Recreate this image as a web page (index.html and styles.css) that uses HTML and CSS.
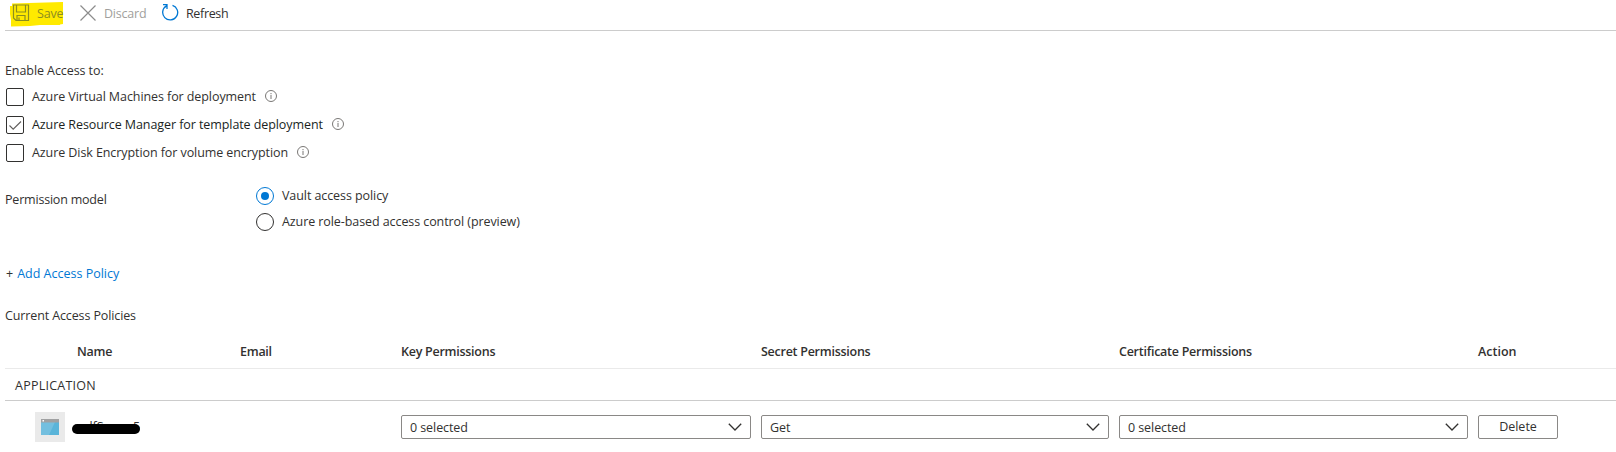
FILE: index.html
```html
<!DOCTYPE html>
<html lang="en">
<head>
<meta charset="utf-8">
<title>Access policies</title>
<link rel="stylesheet" href="styles.css">
</head>
<body>
<header class="toolbar">
  <div class="tool save">
    <svg class="marker" viewBox="0 0 54 25" width="54" height="25"><path d="M2 1.500L53 0V22L50 22.500V23L30 23L20 24L1 24.500V18L0 12V4H2Z" fill="#ffea00"/></svg>
    <svg class="tool-icon" viewBox="0 0 18 18" width="18" height="18" fill="none" stroke="#8b8d20" stroke-width="1.2"><path d="M1.500 1h15v15.500H4L1.500 14zM4.500 1v7h9V1M5 16.500v-5h8v5M7 16.500v-3"/></svg>
    <span>Save</span>
  </div>
  <div class="tool discard">
    <svg class="tool-icon" viewBox="0 0 18 18" width="18" height="18" fill="none" stroke="#8c8c8c" stroke-width="1.2"><path d="M1.500 1.500l15 15M16.500 1.500l-15 15"/></svg>
    <span>Discard</span>
  </div>
  <div class="tool refresh">
    <svg class="tool-icon" viewBox="0 0 18 18" width="18" height="18" fill="none" stroke="#0078d4" stroke-width="1.3"><path d="M11.500 1.300A7.500 7.500 0 1 1 5.500 1.900M2 .7H6V5"/></svg>
    <span>Refresh</span>
  </div>
</header>
<main>
  <section class="enable">
    <p class="label">Enable Access to:</p>
    <div class="check-row"><span class="box"></span><span>Azure Virtual Machines for deployment</span><svg class="info" viewBox="0 0 12 12" width="12" height="12"><circle cx="6" cy="6" r="5.500"/><path d="M6 5v4M6 3v1.200"/></svg></div>
    <div class="check-row"><span class="box"><svg viewBox="0 0 16 16" width="16" height="16"><path d="M2.500 8.500l3.700 3.700L14 4.500"/></svg></span><span class="dark">Azure Resource Manager for template deployment</span><svg class="info" viewBox="0 0 12 12" width="12" height="12"><circle cx="6" cy="6" r="5.500"/><path d="M6 5v4M6 3v1.200"/></svg></div>
    <div class="check-row"><span class="box"></span><span>Azure Disk Encryption for volume encryption</span><svg class="info" viewBox="0 0 12 12" width="12" height="12"><circle cx="6" cy="6" r="5.500"/><path d="M6 5v4M6 3v1.200"/></svg></div>
  </section>
  <section class="model">
    <span class="model-label">Permission model</span>
    <div class="radios">
      <div class="radio-row"><span class="radio on"></span><span>Vault access policy</span></div>
      <div class="radio-row"><span class="radio"></span><span>Azure role-based access control (preview)</span></div>
    </div>
  </section>
  <a class="add"><span class="plus">+</span><span>Add Access Policy</span></a>
  <p class="current">Current Access Policies</p>
  <div class="grid head">
    <span class="name">Name</span><span>Email</span><span>Key Permissions</span><span>Secret Permissions</span><span>Certificate Permissions</span><span class="action">Action</span>
  </div>
  <div class="group">APPLICATION</div>
  <div class="grid item">
    <div class="identity">
      <span class="app"><svg viewBox="0 0 18 16" width="18" height="16"><path fill="#59b4d9" d="M0 3h18v13H0z"/><path fill="#73bfdf" d="M0 3h14L8 16H0z"/><path fill="#a0a1a2" d="M0 0h18v3.500H0z"/><path fill="#fff" d="M1.500 1h1.500v1.500H1.500z"/></svg></span>
      <span class="redacted"><span class="peek">dfS</span><span class="peek last">5</span><span class="ink"></span></span>
    </div>
    <span></span>
    <div class="select"><span>0 selected</span><svg viewBox="0 0 14 8" width="14" height="8"><path d="M.8 .8L7 7L13.200 .8"/></svg></div>
    <div class="select"><span>Get</span><svg viewBox="0 0 14 8" width="14" height="8"><path d="M.8 .8L7 7L13.200 .8"/></svg></div>
    <div class="select"><span>0 selected</span><svg viewBox="0 0 14 8" width="14" height="8"><path d="M.8 .8L7 7L13.200 .8"/></svg></div>
    <button class="delete">Delete</button>
  </div>
</main>
</body>
</html>
```
FILE: styles.css
```css
* { box-sizing: border-box; }
body { margin: 0; height: 452px; overflow: hidden; background: #fff; color: #323130; font: 12.5px/18px "Open Sans", "Noto Sans", sans-serif; letter-spacing: -0.08px; white-space: nowrap; }
p { margin: 0; }
svg { display: block; flex: none; }
.toolbar { display: flex; height: 31px; margin-left: 5px; border-bottom: 1px solid #ccc; padding: 4px 0 0 7px; letter-spacing: -0.2px; }
.tool { display: flex; height: 18px; gap: 7px; position: relative; }
.tool span { padding-top: 1px; }
.save { width: 67px; color: #8b8d20; }
.save .tool-icon, .save span { position: relative; }
.marker { position: absolute; left: -2px; top: -2px; }
.discard { width: 82px; color: #a19f9d; }
.refresh { letter-spacing: -0.35px; }
.enable { padding: 31px 0 0 5px; }
.label { height: 21px; }
.check-row { display: flex; align-items: center; height: 28px; }
.box { width: 18px; height: 18px; margin-right: 8px; margin-left: 1px; border: 1px solid #323130; border-radius: 2px; }
.box path { fill: none; stroke: #605e5c; stroke-width: 1.1; }
.dark { color: #201f1e; }
.info { margin: 0 0 2px 9px; fill: none; stroke: #797775; stroke-width: 1; }
.model { display: flex; height: 69px; padding: 16px 0 0 5px; }
.model-label { width: 251px; padding-top: 8px; letter-spacing: -0.2px; }
.radio-row { display: flex; align-items: center; height: 26px; gap: 8px; }
.radio { width: 18px; height: 18px; border: 1px solid #323130; border-radius: 50%; display: grid; place-items: center; }
.radio.on { border-color: #0078d4; }
.radio.on::after { content: ""; width: 8px; height: 8px; border-radius: 50%; background: #0078d4; }
.add { display: flex; gap: 4px; margin: 29px 0 0 6px; color: #0078d4; letter-spacing: 0; }
.plus { color: #323130; }
.current { margin: 24px 0 0 5px; letter-spacing: -0.12px; }
.grid { display: grid; grid-template-columns: 235px 161px 360px 358px 359px 80px; margin-left: 5px; }
.head { height: 44px; padding-top: 18px; border-bottom: 1px solid #eaeaea; font-weight: 600; letter-spacing: -0.26px; }
.name { padding-left: 72px; }
.action { letter-spacing: 0; }
.group { height: 32px; margin-left: 5px; padding: 8px 0 0 10px; border-bottom: 1px solid #ccc; letter-spacing: 0.24px; }
.item { padding-top: 14px; }
.identity { display: flex; height: 30px; margin: -3px 0 0 30px; gap: 7px; }
.app { display: grid; place-items: center; width: 30px; height: 30px; background: #eaeaea; }
.redacted { position: relative; width: 70px; height: 30px; }
.peek { position: absolute; left: 13px; top: 6px; }
.peek.last { left: 61px; }
.ink { position: absolute; left: 0; top: 12px; width: 68px; height: 10px; border-radius: 5px; background: #000; }
.select { display: flex; align-items: center; justify-content: space-between; height: 24px; margin-right: 10px; padding: 0 8px; border: 1px solid #8a8886; border-radius: 2px; }
.select span { padding-top: 2px; }
.select path { fill: none; stroke: #323130; stroke-width: 1.3; }
.delete { width: 80px; height: 24px; padding: 0 0 1px; border: 1px solid #8a8886; border-radius: 2px; background: #fff; color: #323130; font: 500 12.5px/18px "Open Sans", sans-serif; }
```
